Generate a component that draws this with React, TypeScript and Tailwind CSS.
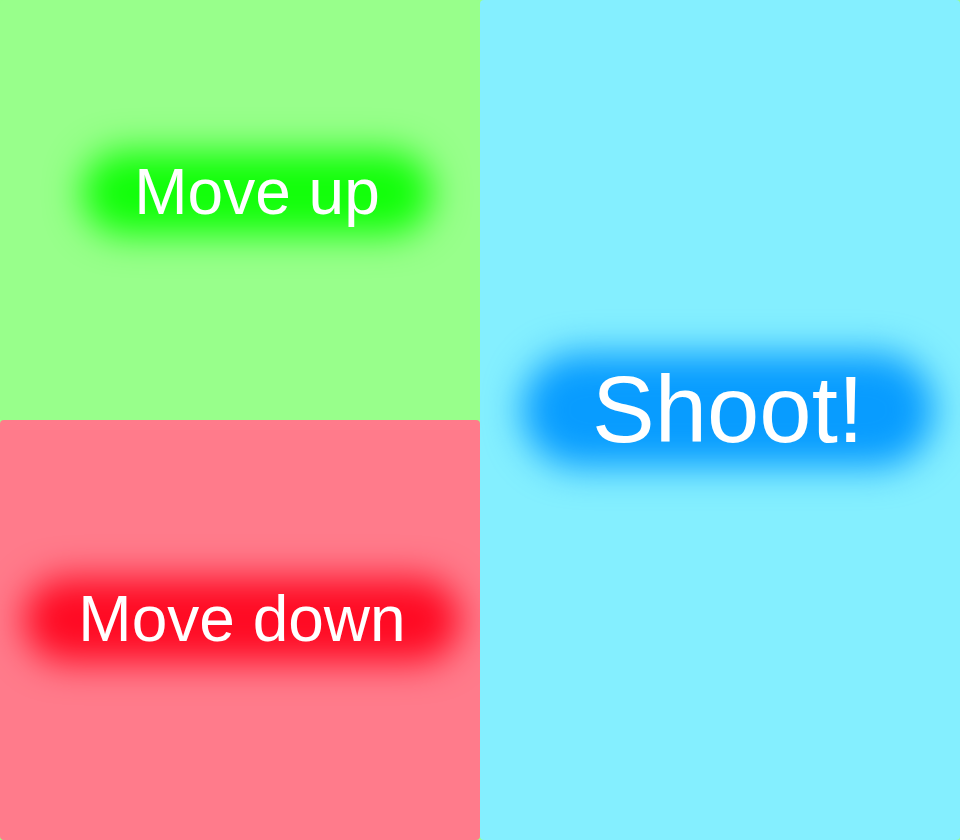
import React from 'react'

type PadProps = {
  label: string
  panel: string
  glow: string
  text: string
  offset: string
}

function Pad({ label, panel, glow, text, offset }: PadProps) {
  return (
    <div className={`flex flex-1 items-center justify-center overflow-hidden rounded-[4px] ${panel}`}>
      <div className={`relative ${offset}`}>
        <span className={`absolute rounded-full blur-[18px] ${glow}`} />
        <span className={`relative block whitespace-nowrap leading-[1.15] text-white ${text}`}>
          {label}
        </span>
      </div>
    </div>
  )
}

export default function App() {
  return (
    <div
      className="grid h-[840px] w-[960px] grid-cols-2 bg-[#98ff8b]"
      style={{ fontFamily: '"Liberation Sans", Arial, sans-serif' }}
    >
      <div className="flex flex-col">
        <Pad
          label="Move up"
          panel="bg-[#98ff8b]"
          glow="-inset-x-[52px] -inset-y-[5px] bg-[#12ff0a]"
          text="text-[64px]"
          offset="mb-[34px] ml-[34px]"
        />
        <Pad
          label="Move down"
          panel="bg-[#ff7b8b]"
          glow="-inset-x-[54px] -inset-y-[5px] bg-[#ff0a23]"
          text="text-[64px]"
          offset="mb-[20px] ml-[4px]"
        />
      </div>
      <Pad
        label="Shoot!"
        panel="bg-[#84efff]"
        glow="-inset-x-[70px] -inset-y-[3px] bg-[#089cff]"
        text="text-[94px]"
        offset="mb-[20px] ml-[16px]"
      />
    </div>
  )
}
